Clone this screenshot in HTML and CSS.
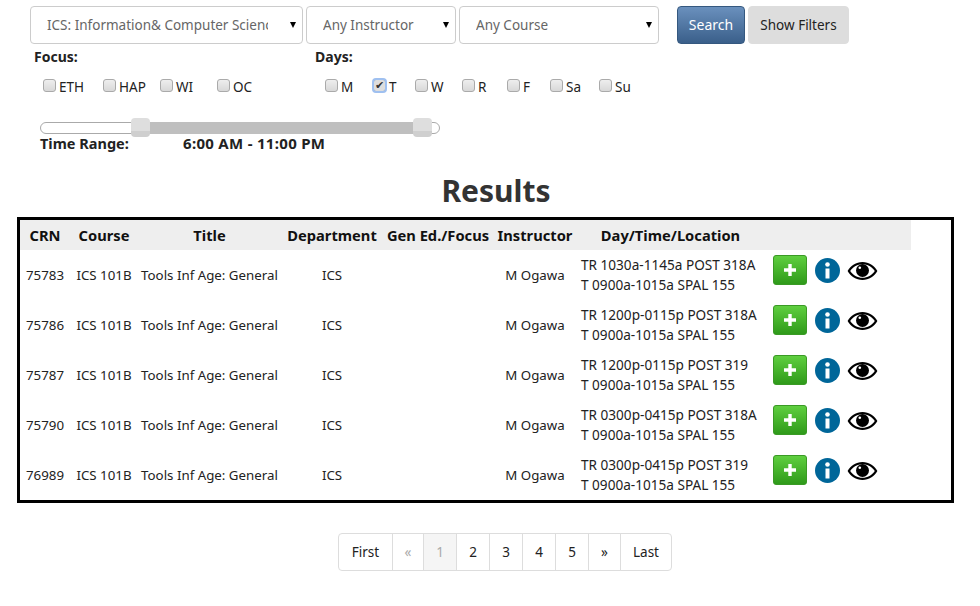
FILE: index.html
```html
<!DOCTYPE html>
<html lang="en">
<head>
    <meta charset="UTF-8">
    <meta name="viewport" content="width=device-width, initial-scale=1.0">
    <title>Class Search Results</title>
    <link rel="stylesheet" href="styles.css">
</head>
<body>

    <form class="search-bar">
        <span class="pick-wrap pick-dept"><select class="pick"><option>ICS: Information&amp; Computer Science</option></select></span>
        <span class="pick-wrap pick-inst"><select class="pick"><option>Any Instructor</option></select></span>
        <span class="pick-wrap pick-course"><select class="pick"><option>Any Course</option></select></span>
        <button type="button" class="btn btn-search">Search</button>
        <button type="button" class="btn btn-filters">Show Filters</button>
    </form>

    <div class="filters">
        <div class="filter-group group-focus">
            <div class="filter-label">Focus:</div>
            <div class="checks">
                <label class="check"><input type="checkbox">ETH</label>
                <label class="check"><input type="checkbox">HAP</label>
                <label class="check"><input type="checkbox">WI</label>
                <label class="check"><input type="checkbox">OC</label>
            </div>
        </div>
        <div class="filter-group group-days">
            <div class="filter-label">Days:</div>
            <div class="checks">
                <label class="check"><input type="checkbox">M</label>
                <label class="check"><input type="checkbox" checked>T</label>
                <label class="check"><input type="checkbox">W</label>
                <label class="check"><input type="checkbox">R</label>
                <label class="check"><input type="checkbox">F</label>
                <label class="check"><input type="checkbox">Sa</label>
                <label class="check"><input type="checkbox">Su</label>
            </div>
        </div>
    </div>

    <div class="slider">
        <div class="slider-fill"></div>
        <div class="slider-handle handle-from"></div>
        <div class="slider-handle handle-to"></div>
    </div>
    <div class="time-range">
        <span class="time-label">Time Range:</span>
        <span class="time-value">6:00 AM - 11:00 PM</span>
    </div>

    <h1 class="results-title">Results</h1>

    <div class="results">
        <table>
            <colgroup>
                <col class="col-crn"><col class="col-course"><col class="col-title"><col class="col-dept">
                <col class="col-gen"><col class="col-inst"><col class="col-time"><col class="col-actions">
            </colgroup>
            <thead>
                <tr>
                    <th>CRN</th><th>Course</th><th>Title</th><th>Department</th>
                    <th>Gen Ed./Focus</th><th>Instructor</th><th>Day/Time/Location</th><th></th>
                </tr>
            </thead>
            <tbody id="rows"></tbody>
        </table>
    </div>

    <ul class="pagination">
        <li><a href="#">First</a></li>
        <li class="off"><a href="#">&laquo;</a></li>
        <li class="current"><a href="#">1</a></li>
        <li><a href="#">2</a></li>
        <li><a href="#">3</a></li>
        <li><a href="#">4</a></li>
        <li><a href="#">5</a></li>
        <li><a href="#">&raquo;</a></li>
        <li><a href="#">Last</a></li>
    </ul>

    <script>
        var sections = [
            ['75783', 'TR 1030a-1145a POST 318A'],
            ['75786', 'TR 1200p-0115p POST 318A'],
            ['75787', 'TR 1200p-0115p POST 319'],
            ['75790', 'TR 0300p-0415p POST 318A'],
            ['76989', 'TR 0300p-0415p POST 319']
        ];

        var actions =
            '<div class="actions">' +
            '<button type="button" class="btn-add"><svg width="12" height="12" viewBox="0 0 12 12"><path d="M4.3 0h3.400v4.300H12v3.400H7.700V12H4.300V7.700H0V4.300h4.300z" fill="#fff"/></svg></button>' +
            '<svg class="icon-info" width="25" height="25" viewBox="0 0 25 25"><circle cx="12.500" cy="12.500" r="12.500" fill="#069"/><circle cx="12.500" cy="6.500" r="2.300" fill="#fff"/><path d="M10.500 10.500h4v10h-4z" fill="#fff"/></svg>' +
            '<svg class="icon-eye" width="31" height="20" viewBox="0 0 31 20"><path d="M15.500 1C9 1 3.800 4.600.6 10c3.200 5.400 8.400 9 14.900 9s11.700-3.600 14.900-9C27.200 4.600 22 1 15.500 1zm0 2.200c5.100 0 9.500 2.600 12.300 6.800-2.800 4.200-7.200 6.800-12.300 6.800S6 14.200 3.200 10C6 5.800 10.400 3.200 15.500 3.200z"/><circle cx="15.500" cy="9.500" r="6.500"/><circle cx="12.800" cy="6.800" r="1.300" fill="#fff"/></svg>' +
            '</div>';

        document.getElementById('rows').innerHTML = sections.map(function (s) {
            return '<tr><td>' + s[0] + '</td><td>ICS 101B</td><td>Tools Inf Age: General</td><td>ICS</td><td></td><td>M Ogawa</td>' +
                '<td class="cell-time">' + s[1] + '<br>T 0900a-1015a SPAL 155</td><td>' + actions + '</td></tr>';
        }).join('');
    </script>
</body>
</html>
```

FILE: styles.css
```css
* {
    box-sizing: border-box;
}

body {
    margin: 0;
    font-family: "Noto Sans", "Open Sans", sans-serif;
    font-size: 14px;
    line-height: 20px;
    color: #222;
    background-color: #fff;
}

.search-bar {
    display: flex;
    align-items: flex-start;
    padding: 6px 0 0 30px;
    gap: 3px;
}

.pick-wrap {
    position: relative;
    display: block;
}

/* black arrow of the drop-down */
.pick-wrap::after {
    content: "";
    position: absolute;
    top: 16px;
    right: 7px;
    border-top: 6px solid #000;
    border-left: 3px solid transparent;
    border-right: 3px solid transparent;
    pointer-events: none;
}

.pick {
    display: block;
    appearance: none;
    width: 100%;
    height: 38px;
    padding: 0 34px 0 16px;
    font: inherit;
    font-size: 13.5px;
    color: #666;
    background-color: #fff;
    border: 1px solid #ccc;
    border-radius: 4px;
}

.pick-dept {
    width: 273px;
}

.pick-inst {
    width: 150px;
}

.pick-course {
    width: 200px;
}

.btn {
    height: 38px;
    padding: 0;
    font: inherit;
    border-radius: 4px;
    border: 1px solid transparent;
}

.btn-search {
    width: 68px;
    margin-left: 15px;
    color: #fff;
    background: linear-gradient(#6a90bd, #3a5f8a);
    border-color: #35587f;
}

.btn-filters {
    width: 101px;
    font-size: 13.5px;
    color: #222;
    background-color: #ddd;
    border-color: #ddd;
}

.filters {
    display: flex;
    padding: 3px 0 0 34px;
}

.group-focus {
    width: 281px;
}

.filter-label {
    font-weight: bold;
    font-size: 14px;
    line-height: 20px;
}

.checks {
    display: grid;
    margin-top: 10px;
    margin-left: 9px;
    grid-template-columns: 60px 57px 57px auto;
}

.group-days .checks {
    margin-left: 10px;
    grid-template-columns: 48px 42px 47px 45px 43px 49px auto;
}

.check {
    display: flex;
    align-items: center;
    height: 20px;
    font-size: 13.5px;
}

.check input {
    appearance: none;
    flex: none;
    width: 13px;
    height: 13px;
    margin: -4px 3px 0 0;
    background: linear-gradient(#eee, #d8d8d8);
    border: 1px solid #aaa;
    border-radius: 3px;
}

.check input:checked {
    outline: 2px solid #9fc0f0;
    outline-offset: -1px;
    background: #ddd;
}

.check input:checked::after {
    content: "\2714";
    display: block;
    font-size: 11px;
    line-height: 11px;
    text-align: center;
    color: #333;
}

.slider {
    position: relative;
    width: 400px;
    height: 12px;
    margin: 25px 0 0 40px;
    background-color: #fff;
    border: 1px solid #aaa;
    border-radius: 6px;
}

.slider-fill {
    position: absolute;
    left: 100px;
    width: 282px;
    top: -1px;
    bottom: -1px;
    background-color: #bfbfbf;
}

.slider-handle {
    position: absolute;
    top: -5px;
    width: 19px;
    height: 19px;
    background: linear-gradient(#dedede 70%, #cfcfcf 70%);
    border-radius: 4px;
}

.handle-from {
    left: 90px;
}

.handle-to {
    left: 372px;
}

.time-range {
    display: flex;
    padding-left: 40px;
    line-height: 18px;
    font-weight: bold;
    font-size: 14.5px;
}

.time-label {
    width: 143px;
}

.time-value {
    font-size: 15px;
    letter-spacing: 0.3px;
}

.results-title {
    margin: 19px 0 6px;
    padding-left: 12px;
    font-size: 30px;
    line-height: 40px;
    font-weight: bold;
    text-align: center;
    color: #333;
}

.results {
    width: 937px;
    margin-left: 17px;
    border: 3px solid #000;
}

table {
    table-layout: fixed;
    width: 891px;
    border-collapse: collapse;
}

.col-crn { width: 50px; }
.col-course { width: 68px; }
.col-title { width: 143px; }
.col-dept { width: 102px; }
.col-gen { width: 110px; }
.col-inst { width: 84px; }
.col-time { width: 187px; }
.col-actions { width: 147px; }

thead {
    background-color: #eee;
}

th {
    height: 30px;
    padding: 0;
    font-size: 14.7px;
    text-align: center;
    color: #111;
    white-space: nowrap;
}

td {
    height: 50px;
    padding: 0;
    font-size: 13.3px;
    text-align: center;
    white-space: nowrap;
}

td.cell-time {
    padding-left: 4px;
    font-size: 13.6px;
    text-align: left;
}

.actions {
    display: flex;
    align-items: center;
    height: 50px;
    padding: 0 0 10px 9px;
}

.btn-add {
    display: flex;
    align-items: center;
    justify-content: center;
    width: 34px;
    height: 30px;
    padding: 0;
    margin-right: 8px;
    background: linear-gradient(#5fcf3f, #2f9a1a);
    border: 1px solid #3a9a25;
    border-radius: 3px;
}

.icon-eye {
    margin: 2px 0 0 7px;
}

.pagination {
    display: grid;
    grid-template-columns: 54px 31px repeat(5, 33px) 32px 52px;
    width: 334px;
    margin: 30px 0 0 338px;
    padding: 0;
    list-style: none;
}

.pagination a {
    display: block;
    height: 38px;
    padding: 8px 0;
    margin-right: -1px;
    font-size: 13.5px;
    text-align: center;
    color: #222;
    text-decoration: none;
    background-color: #fff;
    border: 1px solid #ddd;
}

.pagination li:first-child a {
    border-radius: 4px 0 0 4px;
}

.pagination li:last-child a {
    margin-right: 0;
    border-radius: 0 4px 4px 0;
}

.pagination .off a {
    color: #aaa;
}

.pagination .current a {
    color: #aaa;
    background-color: #f5f5f5;
}
```
